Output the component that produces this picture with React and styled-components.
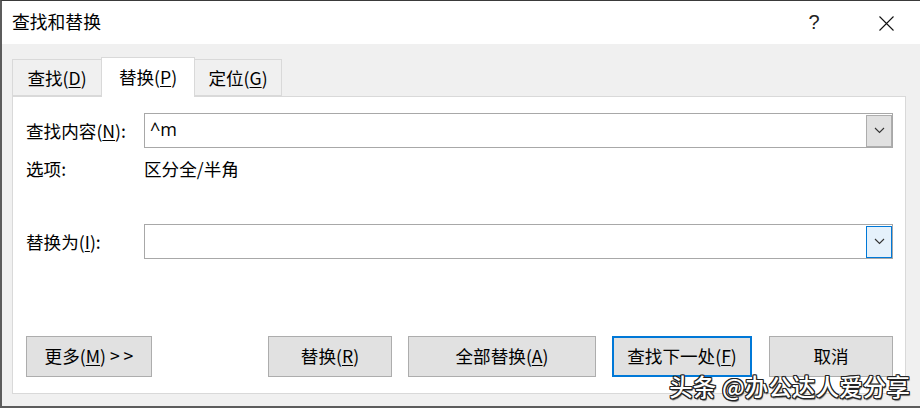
import React from "react";
import styled, { createGlobalStyle } from "styled-components";

const Global = createGlobalStyle`
  html, body { margin: 0; padding: 0; background: #f0f0f0; }
  body { width: 920px; height: 408px; overflow: hidden; }
  * { box-sizing: border-box; }
`;

const font = `"Noto Sans CJK SC", "Noto Sans", sans-serif`;

const Window = styled.div`
  position: relative;
  width: 920px;
  height: 408px;
  background: #f0f0f0;
  border-top: 1px solid #3a3a3a;
  border-left: 2px solid #5c5c5c;
  border-bottom: 2px solid #5c5c5c;
  display: flex;
  flex-direction: column;
  font-family: ${font};
  color: #000;
`;

const TitleBar = styled.div`
  height: 43px;
  background: #fff;
  display: flex;
  align-items: center;
  padding-left: 10px;
  flex-shrink: 0;
`;

const Title = styled.div`
  font-size: 17.8px;
  line-height: 1;
  flex: 1;
  margin-top: -2px;
`;

const HelpGlyph = styled.div`
  font-family: "Liberation Sans", sans-serif;
  font-size: 20px;
  color: #222;
  width: 20px;
  text-align: center;
  margin-right: 55px;
  margin-top: -1px;
`;

const CloseBox = styled.div`
  width: 15px;
  height: 15px;
  margin-right: 26px;
  margin-top: 2px;
  display: flex;
`;

const Body = styled.div`
  flex: 1;
  display: flex;
  flex-direction: column;
  padding: 13px 14px 12px 10px;
`;

const TabRow = styled.div`
  display: flex;
  align-items: flex-end;
  height: 39px;
  flex-shrink: 0;
`;

const Tab = styled.div`
  position: relative;
  width: ${(p) => p.$w}px;
  height: ${(p) => (p.$active ? 40 : 37)}px;
  margin-bottom: ${(p) => (p.$active ? -1 : 0)}px;
  margin-left: -1px;
  &:first-child { margin-left: 0; }
  z-index: ${(p) => (p.$active ? 2 : 1)};
  background: ${(p) => (p.$active ? "#fff" : "#f0f0f0")};
  border: 1px solid #d9d9d9;
  border-bottom: ${(p) => (p.$active ? "none" : "1px solid #d9d9d9")};
  display: flex;
  align-items: center;
  justify-content: center;
  font-size: 17.6px;
  padding-bottom: ${(p) => (p.$active ? 3 : 0)}px;
`;

const U = styled.span`
  text-decoration: underline;
  text-underline-offset: 2px;
  text-decoration-thickness: 1px;
`;

const Panel = styled.div`
  flex: 1;
  background: #fff;
  border: 1px solid #d9d9d9;
  display: flex;
  flex-direction: column;
  padding: 16px 12px 16px 13px;
`;

const FieldRow = styled.div`
  display: flex;
  align-items: center;
  height: 35px;
  margin-top: ${(p) => p.$mt || 0}px;
`;

const Label = styled.div`
  width: 118px;
  font-size: 17.6px;
  flex-shrink: 0;
`;

const InputBox = styled.div`
  flex: 1;
  height: 35px;
  border: 1px solid #a8a8a8;
  display: flex;
  align-items: center;
  padding: 1px 0 1px 5px;
`;

const InputText = styled.div`
  flex: 1;
  font-family: "Open Sans", "Noto Sans", sans-serif;
  font-size: 18px;
  line-height: 1;
  margin-top: -4px;
`;

const DropBtn = styled.div`
  width: 26px;
  height: 32px;
  border: 1px solid ${(p) => (p.$focus ? "#0078d7" : "#adadad")};
  background: ${(p) => (p.$focus ? "#e5f1fb" : "#e1e1e1")};
  display: flex;
  align-items: center;
  justify-content: center;
`;

const OptionRow = styled.div`
  display: flex;
  align-items: center;
  height: 24px;
  margin-top: 8px;
  font-size: 17.6px;
`;

const ButtonRow = styled.div`
  display: flex;
  margin-top: auto;
  height: 41px;
`;

const Button = styled.div`
  width: ${(p) => p.$w}px;
  margin-left: ${(p) => p.$ml || 0}px;
  height: 41px;
  background: #e1e1e1;
  border: ${(p) => (p.$default ? "2px solid #0078d7" : "1px solid #adadad")};
  display: flex;
  align-items: center;
  justify-content: center;
  font-size: 17.6px;
  padding-bottom: 2px;
  white-space: pre;
`;

const Watermark = styled.div`
  position: absolute;
  right: 10px;
  bottom: 8px;
  font-family: ${font};
  font-size: 23.4px;
  font-weight: 500;
  line-height: 1;
  color: #fff;
  letter-spacing: 0.2px;
  text-shadow:
    1px 1px 0 #222, -1px -1px 0 #222, 1px -1px 0 #222, -1px 1px 0 #222,
    0 1px 0 #222, 1px 0 0 #222, 0 -1px 0 #222, -1px 0 0 #222,
    1px 2px 1px rgba(0,0,0,0.6);
  z-index: 5;
`;

const Chevron = () => (
  <svg width="11" height="7" viewBox="0 0 11 7">
    <path d="M1 1 L5.5 5.5 L10 1" fill="none" stroke="#333" strokeWidth="1.1" />
  </svg>
);

const CloseIcon = () => (
  <svg width="15" height="15" viewBox="0 0 15 15">
    <path d="M0.5 0.5 L14.5 14.5 M14.5 0.5 L0.5 14.5" stroke="#111" strokeWidth="1.1" fill="none" />
  </svg>
);

export default function App() {
  return (
    <>
      <Global />
      <Window>
        <TitleBar>
          <Title>查找和替换</Title>
          <HelpGlyph>?</HelpGlyph>
          <CloseBox>
            <CloseIcon />
          </CloseBox>
        </TitleBar>
        <Body>
          <TabRow>
            <Tab $w={90}>查找(<U>D</U>)</Tab>
            <Tab $w={94} $active>替换(<U>P</U>)</Tab>
            <Tab $w={88}>定位(<U>G</U>)</Tab>
          </TabRow>
          <Panel>
            <FieldRow>
              <Label>查找内容(<U>N</U>):</Label>
              <InputBox>
                <InputText>^m</InputText>
                <DropBtn>
                  <Chevron />
                </DropBtn>
              </InputBox>
            </FieldRow>
            <OptionRow>
              <Label>选项:</Label>
              <div>区分全/半角</div>
            </OptionRow>
            <FieldRow $mt={44}>
              <Label>替换为(<U>I</U>):</Label>
              <InputBox>
                <InputText />
                <DropBtn $focus>
                  <Chevron />
                </DropBtn>
              </InputBox>
            </FieldRow>
            <ButtonRow>
              <Button $w={126}>更多(<U>M</U>) &gt; &gt;</Button>
              <Button $w={124} $ml={116}>替换(<U>R</U>)</Button>
              <Button $w={188} $ml={16}>全部替换(<U>A</U>)</Button>
              <Button $w={140} $ml={16} $default>查找下一处(<U>F</U>)</Button>
              <Button $w={124} $ml={17}>取消</Button>
            </ButtonRow>
          </Panel>
        </Body>
        <Watermark>头条 @办公达人爱分享</Watermark>
      </Window>
    </>
  );
}
